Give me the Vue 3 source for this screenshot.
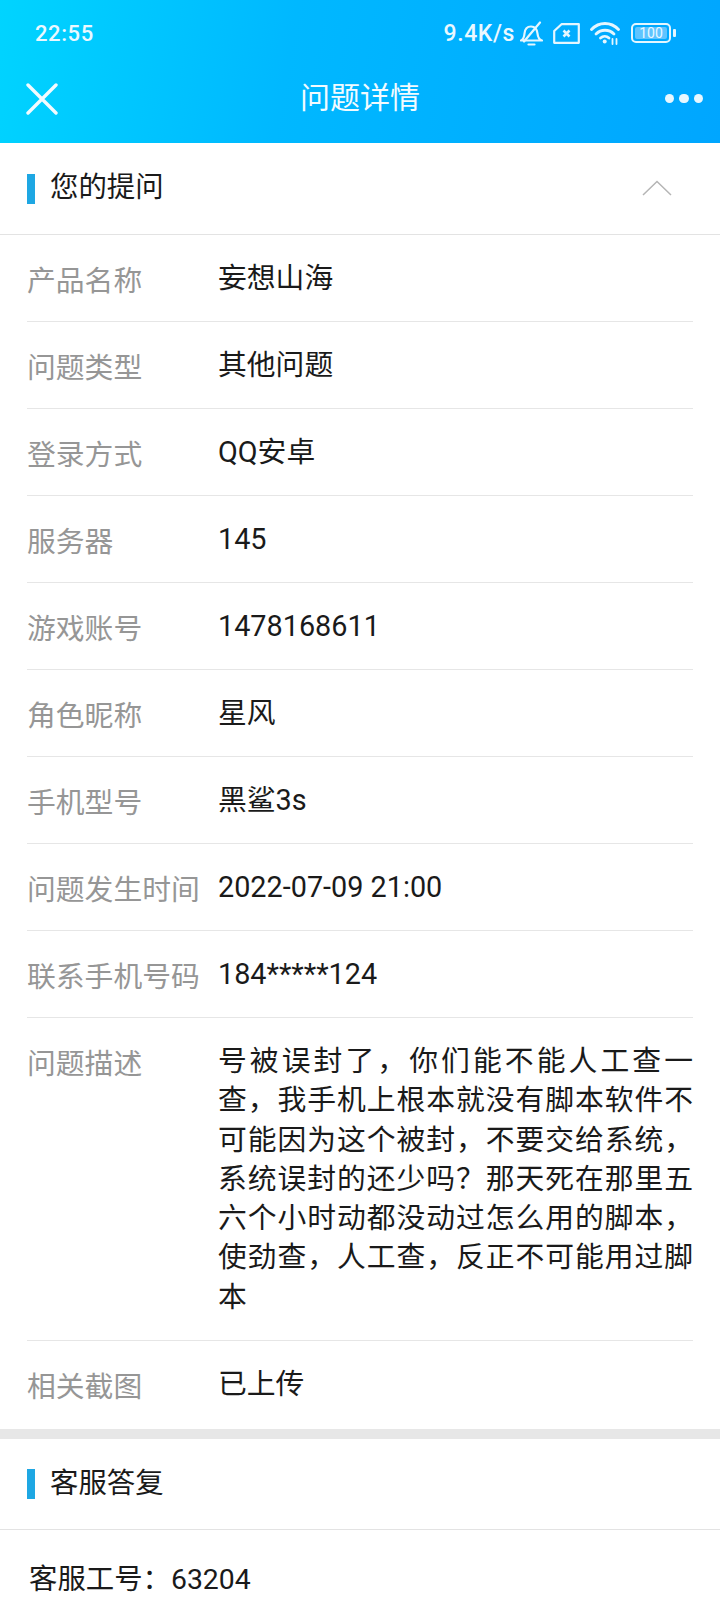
<script setup>
const rows = [
  ['产品名称', '妄想山海'],
  ['问题类型', '其他问题'],
  ['登录方式', 'QQ安卓'],
  ['服务器', '145'],
  ['游戏账号', '1478168611'],
  ['角色昵称', '星风'],
  ['手机型号', '黑鲨3s'],
  ['问题发生时间', '2022-07-09 21:00'],
  ['联系手机号码', '184*****124'],
  ['问题描述', '号被误封了，你们能不能人工查一查，我手机上根本就没有脚本软件不可能因为这个被封，不要交给系统，系统误封的还少吗？那天死在那里五六个小时动都没动过怎么用的脚本，使劲查，人工查，反正不可能用过脚本'],
  ['相关截图', '已上传'],
]
</script>

<template>
  <div class="page">
    <header class="top">
      <div class="status">
        <span class="time">22:55</span>
        <div class="status-right">
          <span class="speed">9.4K/s</span>
          <svg class="i-bell" width="23" height="25" viewBox="0 0 23 25" fill="none" stroke="#e4f6ff" stroke-width="2.200" stroke-linejoin="round" stroke-linecap="round">
            <path d="M1 19.500c2.500-1 3.200-3.500 3.500-7 .4-4.500 3-7 6.500-7 3.500 0 6 2.500 6.500 7 .3 3.500 1.500 6 4.500 7z"/>
            <path d="M8.500 23.500h6"/>
            <path d="M4 20.500L20 1.500"/>
          </svg>
          <svg class="i-sim" width="27" height="21" viewBox="0 0 27 21" fill="none" stroke="#e4f6ff" stroke-width="2.200" stroke-linejoin="round">
            <path d="M8.500 1.200H25.800V19.800H1.200V8z"/>
            <path d="M10.500 7.500l6 6M16.500 7.500l-6 6" stroke-width="2.600"/>
          </svg>
          <svg class="i-wifi" width="30" height="23" viewBox="0 0 30 23" fill="none" stroke="#e4f6ff" stroke-width="2.800" stroke-linecap="round">
            <path d="M1.500 7.500C9-.5 21-.5 28.500 7.500"/>
            <path d="M6 12c5-5 13-5 18 0"/>
            <path d="M10.500 16c2.500-2.300 6-2.300 8.500 0"/>
            <circle cx="14.700" cy="19.500" r="2" fill="#e4f6ff" stroke="none"/>
            <path d="M22.500 17v5M26.500 17v5" stroke-width="1.800"/>
          </svg>
          <div class="battery">
            <div class="cell"><span>100</span></div>
            <i class="tip"></i>
          </div>
        </div>
      </div>
      <div class="nav">
        <svg class="close" width="32" height="32" viewBox="0 0 32 32" stroke="#f2fbff" stroke-width="3.400" stroke-linecap="round">
          <path d="M2 2l28 28M30 2L2 30"/>
        </svg>
        <span class="nav-title">问题详情</span>
        <div class="dots"><i></i><i></i><i></i></div>
      </div>
    </header>

    <section>
      <div class="sec-head first">
        <i class="bar"></i>
        <span class="sec-title">您的提问</span>
        <svg class="chev" width="30" height="16" viewBox="0 0 30 16" fill="none" stroke="#b5b5b5" stroke-width="1.500">
          <path d="M1 15L15 1.500 29 15"/>
        </svg>
      </div>
      <div class="rows">
        <div v-for="r in rows" :key="r[0]" class="row">
          <span class="label">{{ r[0] }}</span>
          <span class="value" :class="{ long: r[1].length > 30 }">{{ r[1] }}</span>
        </div>
      </div>
    </section>

    <div class="band"></div>

    <section>
      <div class="sec-head">
        <i class="bar"></i>
        <span class="sec-title">客服答复</span>
      </div>
      <div class="staff">客服工号：63204</div>
    </section>
  </div>
</template>

<style scoped>
.page {
  width: 720px;
  height: 1600px;
  overflow: hidden;
  background: #fff;
  color: #1a1a1a;
  font-family: Roboto, "Noto Sans CJK SC", sans-serif;
}
.top {
  height: 143px;
  background: linear-gradient(100deg, #00d4ff 0%, #00b8ff 40%, #00a6ff 100%);
  color: #eaf8ff;
}
.status {
  height: 66px;
  padding: 0 44px 0 35px;
  display: flex;
  align-items: center;
  justify-content: space-between;
}
.time { font-size: 22px; font-weight: 500; letter-spacing: 0.6px; }
.status-right { display: flex; align-items: center; }
.speed { font-size: 23px; font-weight: 500; letter-spacing: 0.6px; }
.i-bell { margin-left: 5px; }
.i-sim { margin-left: 10px; }
.i-wifi { margin-left: 10px; }
.battery { display: flex; align-items: center; margin-left: 11px; }
.cell {
  width: 40px;
  height: 20px;
  box-sizing: border-box;
  border: 2px solid #e4f6ff;
  border-radius: 5px;
  padding: 2px;
  display: flex;
}
.cell span {
  flex: 1;
  background: #5fc4ff;
  border-radius: 2px;
  font-size: 14px;
  line-height: 12px;
  text-align: center;
}
.tip { width: 3px; height: 8px; margin-left: 2px; background: #e4f6ff; border-radius: 1px; }

.nav {
  height: 77px;
  padding: 0 17px 0 26px;
  display: flex;
  align-items: center;
  justify-content: space-between;
  position: relative;
}
.close { margin-top: -12px; }
.nav-title {
  position: absolute;
  left: 0;
  right: 0;
  top: 11px;
  text-align: center;
  font-size: 30px;
  line-height: 42px;
  color: #f2fbff;
}
.dots { display: flex; gap: 5px; margin-top: -12px; }
.dots i { width: 9.500px; height: 9.500px; border-radius: 50%; background: #e8f7ff; }

.sec-head {
  height: 91px;
  padding: 0 27px;
  display: flex;
  align-items: center;
  border-bottom: 1px solid #e3e3e3;
  box-sizing: border-box;
}
.first { height: 92px; }
.bar { width: 8px; height: 30px; background: #1ea7e3; }
.sec-title { margin-left: 15px; font-size: 28.400px; line-height: 30px; margin-top: -1px; }
.chev { margin-left: auto; margin-right: 21px; margin-top: -2px; }

.rows { padding: 0 27px; }
.row {
  display: flex;
  align-items: flex-start;
  padding: 27px 0 20px;
  border-bottom: 1px solid #e6e6e6;
}
.row:last-child { border-bottom: 0; padding-bottom: 22px; }
.label {
  width: 191px;
  flex: none;
  font-size: 28.800px;
  line-height: 39px;
  color: #969696;
  white-space: nowrap;
}
.value {
  flex: 1;
  font-size: 28.800px;
  line-height: 39px;
  margin-top: -3px;
  text-align: justify;
}
.value.long { line-height: 39.300px; margin-bottom: 3px; }
.band { height: 10px; background: #e7e7e7; }
.staff { padding: 30px 29px 0; font-size: 28.400px; line-height: 39px; }
</style>
